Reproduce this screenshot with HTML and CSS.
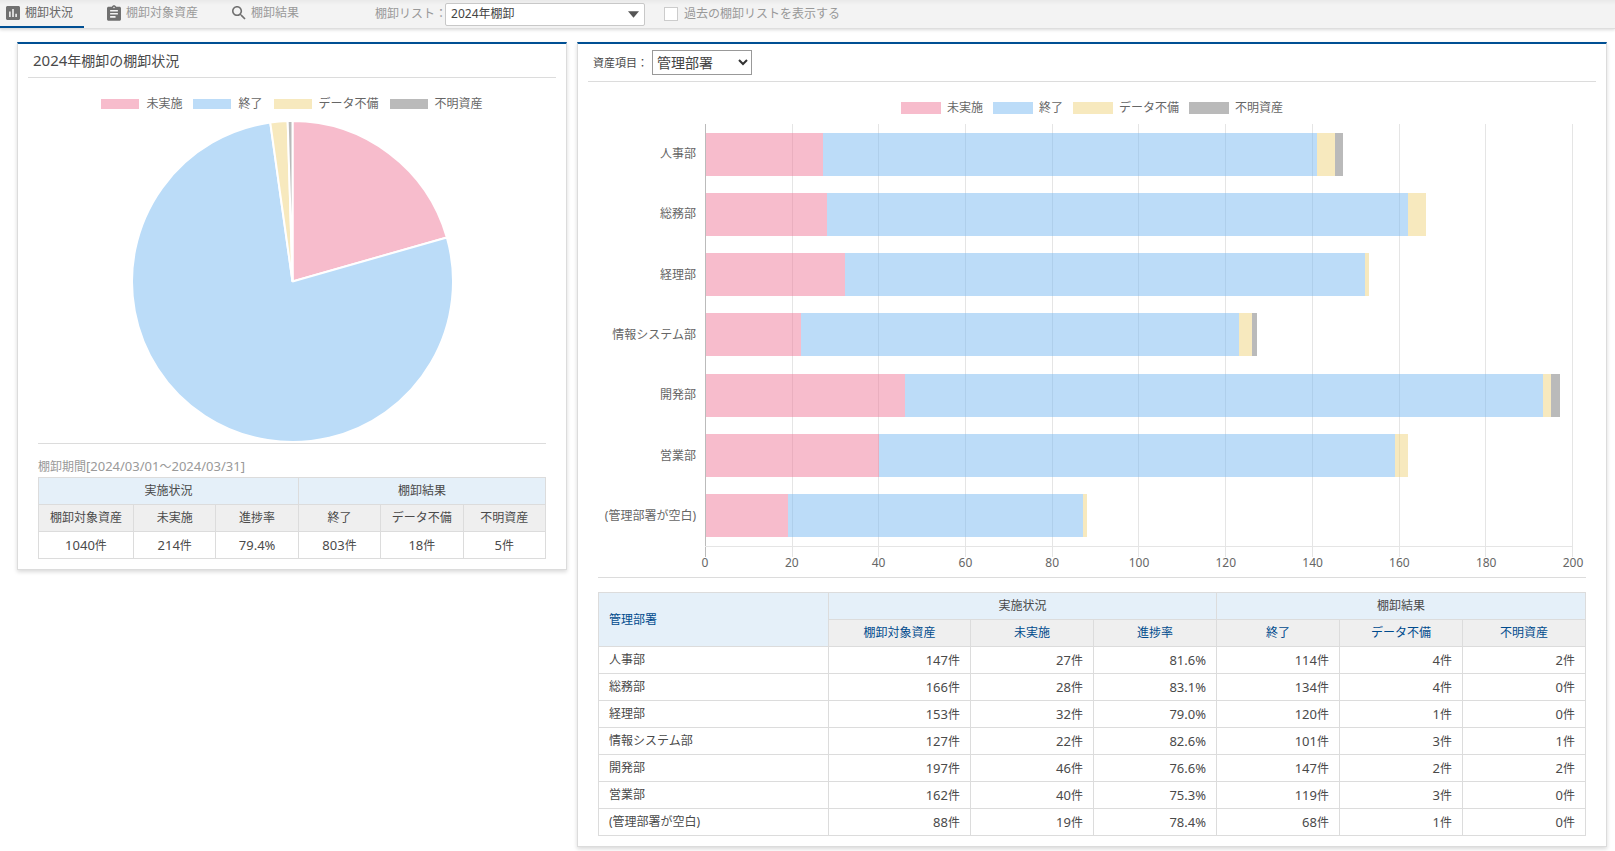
FILE: index.html
```html
<!DOCTYPE html>
<html lang="ja">
<head>
<meta charset="utf-8">
<meta name="viewport" content="width=device-width, initial-scale=1">
<title>棚卸状況</title>
<link rel="stylesheet" href="styles.css">
</head>
<body>
<header class="topbar">
  <nav class="tabs">
    <a class="tab tab-active" href="#status">
      <svg class="tab-icon" viewBox="3 3 18 18"><path d="M19 3H5c-1.100 0-2 .9-2 2v14c0 1.100.9 2 2 2h14c1.100 0 2-.9 2-2V5c0-1.100-.9-2-2-2zM9 17H7v-7h2v7zm4 0h-2V7h2v10zm4 0h-2v-4h2v4z"/></svg>
      <span>棚卸状況</span>
    </a>
    <a class="tab" href="#assets">
      <svg class="tab-icon tab-icon-tall" viewBox="3 1 18 20"><path d="M19 3h-4.180C14.400 1.840 13.300 1 12 1s-2.400.84-2.820 2H5c-1.100 0-2 .9-2 2v14c0 1.100.9 2 2 2h14c1.100 0 2-.9 2-2V5c0-1.100-.9-2-2-2zm-7 0c.55 0 1 .45 1 1s-.45 1-1 1-1-.45-1-1 .45-1 1-1zm2 14H7v-2h7v2zm3-4H7v-2h10v2zm0-4H7V7h10v2z"/></svg>
      <span>棚卸対象資産</span>
    </a>
    <a class="tab" href="#results">
      <svg class="tab-icon" viewBox="3 3 18 18"><path d="M15.500 14h-.79l-.28-.27C15.410 12.590 16 11.110 16 9.500 16 5.910 13.090 3 9.500 3S3 5.910 3 9.500 5.910 16 9.500 16c1.610 0 3.090-.59 4.230-1.570l.27.28v.79l5 4.990L20.490 19l-4.990-5zm-6 0C7.010 14 5 11.990 5 9.500S7.010 5 9.500 5 14 7.010 14 9.500 11.990 14 9.500 14z"/></svg>
      <span>棚卸結果</span>
    </a>
  </nav>
  <div class="filters">
    <label class="list-label" for="list">棚卸リスト：</label>
    <span class="picker picker-list">
      <select id="list"><option>2024年棚卸</option></select>
      <svg class="picker-arrow" viewBox="0 0 10 6"><path d="M0 0h10L5 6z"/></svg>
    </span>
    <label class="check"><input type="checkbox"><span>過去の棚卸リストを表示する</span></label>
  </div>
</header>

<main class="board">
  <section class="card">
    <div class="card-head card-title"><h1><span class="latin">2024</span>年棚卸の棚卸状況</h1></div>
    <div class="card-body">
      <ul class="legend legend-pie">
        <li><i class="pink"></i><span>未実施</span></li>
        <li><i class="blue"></i><span>終了</span></li>
        <li><i class="yellow"></i><span>データ不備</span></li>
        <li><i class="gray"></i><span>不明資産</span></li>
      </ul>
      <svg class="pie" viewBox="-160 -160 320 320" role="img" aria-label="棚卸状況">
        <path class="pie-pink" d="M0 0V-160A160 160 0 0 1 153.870 -43.890Z"/>
        <path class="pie-blue" d="M0 0L153.870 -43.890A160 160 0 1 1 -22.160 -158.460Z"/>
        <path class="pie-yellow" d="M0 0L-22.160 -158.460A160 160 0 0 1 -4.830 -159.930Z"/>
        <path class="pie-gray" d="M0 0L-4.830 -159.930A160 160 0 0 1 0 -160Z"/>
      </svg>
      <hr>
      <p class="period">棚卸期間<span class="latin">[2024/03/01</span>～<span class="latin">2024/03/31]</span></p>
      <table class="summary">
        <colgroup><col class="s1"><col class="s2"><col class="s2"><col class="s2"><col class="s2"><col class="s2"></colgroup>
        <thead>
          <tr class="group"><th colspan="3">実施状況</th><th colspan="3">棚卸結果</th></tr>
          <tr class="sub"><th>棚卸対象資産</th><th>未実施</th><th>進捗率</th><th>終了</th><th>データ不備</th><th>不明資産</th></tr>
        </thead>
        <tbody>
          <tr><td>1040<small>件</small></td><td>214<small>件</small></td><td>79.4%</td><td>803<small>件</small></td><td>18<small>件</small></td><td>5<small>件</small></td></tr>
        </tbody>
      </table>
    </div>
  </section>

  <section class="card">
    <div class="card-head card-filter">
      <label for="field">資産項目：</label>
      <span class="picker picker-field">
        <select id="field"><option>管理部署</option></select>
        <svg class="picker-chevron" viewBox="0 0 10 7"><path d="M1 1l4 4 4-4"/></svg>
      </span>
    </div>
    <div class="card-body">
      <ul class="legend legend-bar">
        <li><i class="pink"></i><span>未実施</span></li>
        <li><i class="blue"></i><span>終了</span></li>
        <li><i class="yellow"></i><span>データ不備</span></li>
        <li><i class="gray"></i><span>不明資産</span></li>
      </ul>
      <div class="chart">
        <div class="names"><span>人事部</span><span>総務部</span><span>経理部</span><span>情報システム部</span><span>開発部</span><span>営業部</span><span>(管理部署が空白)</span></div>
        <div class="gridlines"><i></i><i></i><i></i><i></i><i></i><i></i><i></i><i></i><i></i><i></i></div>
        <div class="bars">
          <div class="bar"><i class="pink" style="width:13.5%"></i><i class="blue" style="width:57%"></i><i class="yellow" style="width:2%"></i><i class="gray" style="width:1%"></i></div>
          <div class="bar"><i class="pink" style="width:14%"></i><i class="blue" style="width:67%"></i><i class="yellow" style="width:2%"></i></div>
          <div class="bar"><i class="pink" style="width:16%"></i><i class="blue" style="width:60%"></i><i class="yellow" style="width:0.5%"></i></div>
          <div class="bar"><i class="pink" style="width:11%"></i><i class="blue" style="width:50.5%"></i><i class="yellow" style="width:1.5%"></i><i class="gray" style="width:0.5%"></i></div>
          <div class="bar"><i class="pink" style="width:23%"></i><i class="blue" style="width:73.5%"></i><i class="yellow" style="width:1%"></i><i class="gray" style="width:1%"></i></div>
          <div class="bar"><i class="pink" style="width:20%"></i><i class="blue" style="width:59.5%"></i><i class="yellow" style="width:1.5%"></i></div>
          <div class="bar"><i class="pink" style="width:9.5%"></i><i class="blue" style="width:34%"></i><i class="yellow" style="width:0.5%"></i></div>
        </div>
        <div class="gridlines ticks"><i></i><i></i><i></i><i></i><i></i><i></i><i></i><i></i><i></i><i></i></div>
        <div class="scale"><span>0</span><span>20</span><span>40</span><span>60</span><span>80</span><span>100</span><span>120</span><span>140</span><span>160</span><span>180</span><span>200</span></div>
      </div>
      <hr>
      <table class="detail">
        <colgroup><col class="d1"><col class="d2"><col class="d3"><col class="d3"><col class="d3"><col class="d3"><col class="d3"></colgroup>
        <thead>
          <tr class="group"><th rowspan="2" class="name"><a href="#sort-name">管理部署</a></th><th colspan="3">実施状況</th><th colspan="3">棚卸結果</th></tr>
          <tr class="sub"><th><a href="#sort-total">棚卸対象資産</a></th><th><a href="#sort-open">未実施</a></th><th><a href="#sort-rate">進捗率</a></th><th><a href="#sort-done">終了</a></th><th><a href="#sort-faulty">データ不備</a></th><th><a href="#sort-unknown">不明資産</a></th></tr>
        </thead>
        <tbody>
          <tr><th>人事部</th><td>147<small>件</small></td><td>27<small>件</small></td><td>81.6%</td><td>114<small>件</small></td><td>4<small>件</small></td><td>2<small>件</small></td></tr>
          <tr><th>総務部</th><td>166<small>件</small></td><td>28<small>件</small></td><td>83.1%</td><td>134<small>件</small></td><td>4<small>件</small></td><td>0<small>件</small></td></tr>
          <tr><th>経理部</th><td>153<small>件</small></td><td>32<small>件</small></td><td>79.0%</td><td>120<small>件</small></td><td>1<small>件</small></td><td>0<small>件</small></td></tr>
          <tr><th>情報システム部</th><td>127<small>件</small></td><td>22<small>件</small></td><td>82.6%</td><td>101<small>件</small></td><td>3<small>件</small></td><td>1<small>件</small></td></tr>
          <tr><th>開発部</th><td>197<small>件</small></td><td>46<small>件</small></td><td>76.6%</td><td>147<small>件</small></td><td>2<small>件</small></td><td>2<small>件</small></td></tr>
          <tr><th>営業部</th><td>162<small>件</small></td><td>40<small>件</small></td><td>75.3%</td><td>119<small>件</small></td><td>3<small>件</small></td><td>0<small>件</small></td></tr>
          <tr><th>(管理部署が空白)</th><td>88<small>件</small></td><td>19<small>件</small></td><td>78.4%</td><td>68<small>件</small></td><td>1<small>件</small></td><td>0<small>件</small></td></tr>
        </tbody>
      </table>
    </div>
  </section>
</main>
</body>
</html>
```
FILE: styles.css
```css
* { box-sizing: border-box; }

body {
  margin: 0;
  background: #fff;
  color: #4a4a4a;
  font: 12px/20px "Noto Sans", "Noto Sans CJK JP", sans-serif;
}

select, input { font: inherit; color: inherit; }
ul { margin: 0; padding: 0; list-style: none; }
a { color: #004b8d; text-decoration: none; }

hr {
  height: 1px;
  margin: 0;
  border: 0;
  background: #dcdcdc;
}

/* Top bar */
.topbar {
  display: flex;
  height: 29px;
  background: linear-gradient(#e9e9e9, #f3f3f3 5px);
  border-bottom: 1px solid #dedede;
  box-shadow: 0 1px 3px rgba(0, 0, 0, 0.15);
  white-space: nowrap;
}

.tabs { display: flex; gap: 23px; }

.tab {
  display: flex;
  align-items: center;
  gap: 5px;
  height: 28px;
  padding: 0 11px 2px 0;
  color: #999;
}

.tab-active {
  padding: 0 11px 0 6px;
  border-bottom: 2px solid #004f93;
  color: #666;
}

.tab-icon { width: 14px; height: 14px; fill: #707070; }
.tab-icon-tall { height: 16px; }

.filters {
  display: flex;
  align-items: center;
  margin-left: 65px;
  color: #999;
}

.list-label { width: 70px; }

.picker { position: relative; display: flex; }

.picker select {
  width: 100%;
  appearance: none;
  background: #fff;
  color: #444;
}

.picker-list { width: 200px; margin-right: 19px; }

.picker-list select {
  height: 23px;
  padding: 0 5px;
  border: 1px solid #c8c8c8;
  border-radius: 2px;
  font-size: 12px;
}

.picker-arrow {
  position: absolute;
  top: 8px;
  right: 6px;
  width: 11px;
  height: 7px;
  fill: #555;
  pointer-events: none;
}

.check { display: flex; align-items: center; gap: 6px; }

.check input {
  width: 14px;
  height: 14px;
  margin: 0;
  appearance: none;
  border: 1px solid #ccc;
  background: #fff;
}

.check input:checked { background: #004f93; }

/* Cards */
.board {
  display: grid;
  grid-template-columns: 550fr 1030fr;
  align-items: start;
  gap: 10px;
  padding: 13px 8px 4px 17px;
}

.card {
  min-width: 0;
  padding: 0 10px 10px;
  border: 1px solid #dcdcdc;
  border-top: 2px solid #004f93;
  box-shadow: 0 2px 4px rgba(0, 0, 0, 0.15);
}

.card-head {
  display: flex;
  align-items: center;
  border-bottom: 1px solid #dcdcdc;
}

.card-title { height: 34px; padding-left: 5px; }
.card-title h1 { margin: 0; font-size: 14px; font-weight: 400; }
.card-title .latin { font-size: 15px; }

.card-filter { height: 38px; padding-left: 5px; font-size: 11px; }
.picker-field { width: 100px; margin-left: 4px; }

.picker-field select {
  height: 25px;
  padding: 0 4px;
  border: 1px solid #999;
  border-radius: 0;
  font-size: 14px;
}

.picker-chevron {
  position: absolute;
  top: 9px;
  right: 4px;
  width: 10px;
  height: 7px;
  fill: none;
  stroke: #333;
  stroke-width: 2;
  pointer-events: none;
}

.card-body { padding: 0 10px; }

/* Series colours */
.pink { background: rgba(239, 121, 153, 0.5); }
.blue { background: rgba(121, 186, 241, 0.5); }
.yellow { background: rgba(239, 211, 125, 0.5); }
.gray { background: rgba(117, 117, 117, 0.5); }

/* Legends */
.legend { display: flex; justify-content: center; color: #666; }
.legend li { display: flex; align-items: center; height: 10px; }

.legend-pie { gap: 11px; margin: 21px 0 12px; }
.legend-pie li { gap: 7px; }
.legend-pie i { width: 38px; height: 10px; }

.legend-bar { gap: 10px; margin: 20px 0 10px; }
.legend-bar li { gap: 6px; height: 12px; }
.legend-bar i { width: 40px; height: 12px; }

/* Pie chart */
.pie { display: block; height: 321px; margin: 0 auto 1px; overflow: visible; }
.pie path { stroke: #fff; stroke-width: 2; stroke-linejoin: bevel; }
.pie-pink { fill: #f7bccc; }
.pie-blue { fill: #bbdcf8; }
.pie-yellow { fill: #f7e9be; }
.pie-gray { fill: #b9b9b9; }

/* Stacked bar chart */
.chart {
  display: grid;
  grid-template-columns: 98px minmax(0, 1fr);
  grid-template-rows: 422px 11px 20px;
  column-gap: 9px;
  padding-right: 13px;
  color: #666;
}

.names, .bars { display: grid; grid-auto-rows: 1fr; align-items: center; }
.names { text-align: right; white-space: nowrap; }
.bars { grid-area: 1 / 2; padding-left: 1px; }
.bar { display: flex; height: 43px; }

.gridlines {
  grid-area: 1 / 2;
  display: grid;
  grid-template-columns: repeat(10, 1fr);
  border-right: 1px solid #e5e5e5;
}

.gridlines i { border-left: 1px solid #e5e5e5; }
.gridlines i:first-child { border-color: #bbb; }
.ticks { grid-area: 2 / 2; border-top: 1px solid #e5e5e5; }

.scale {
  grid-area: 3 / 2;
  display: grid;
  grid-template-columns: repeat(11, 1fr);
  margin: 0 -5%;
  line-height: 12px;
  text-align: center;
}

/* Tables */
table {
  width: 100%;
  border-collapse: collapse;
  table-layout: fixed;
}

th, td {
  height: 27px;
  padding: 0 10px;
  border: 1px solid #dcdcdc;
  font-weight: 400;
  line-height: 18px;
}

td { font-size: 13px; text-align: right; }
small { font-size: 12px; }
tbody th, .name { text-align: left; }
.group th { background: #e5f0f9; }
.sub th { padding: 0; background: #efefef; }

.period { margin: 12px 0 0; color: #999; }
.period .latin { font-size: 13px; }
.summary td { padding: 0; text-align: center; }
.s1 { width: 95px; }

.detail { margin-top: 14px; }
.d1 { width: 230px; }
.d2 { width: 142px; }
```
